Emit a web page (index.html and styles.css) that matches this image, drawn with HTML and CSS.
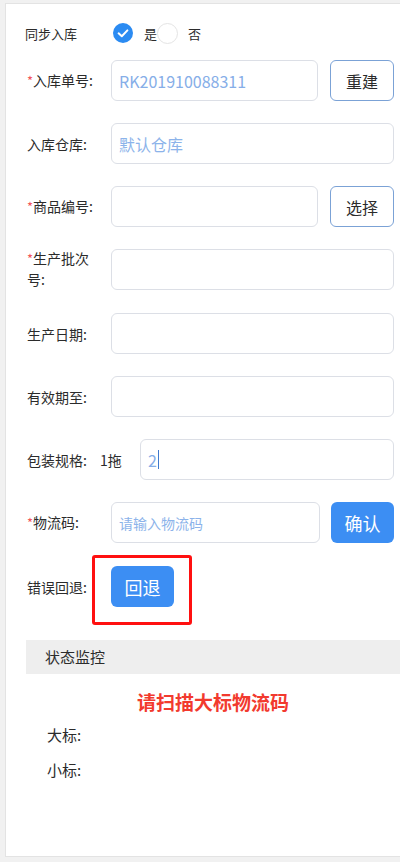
FILE: index.html
```html
<!DOCTYPE html>
<html lang="zh-CN">
<head>
<meta charset="utf-8">
<title>入库</title>
<link rel="stylesheet" href="styles.css">
</head>
<body>
<div class="card">
  <div class="sync">
    <span class="sync-label">同步入库</span>
    <span class="radio checked"><svg viewBox="0 0 20 20" width="20" height="20"><circle cx="10" cy="10" r="10" fill="#2b8bf2"/><polyline points="5.6,10.3 8.8,13.2 14.4,7.4" fill="none" stroke="#fff" stroke-width="2" stroke-linecap="round" stroke-linejoin="round"/></svg></span>
    <span class="opt opt-yes">是</span>
    <span class="radio empty"></span>
    <span class="opt opt-no">否</span>
  </div>

  <div class="row">
    <label class="label"><i class="req">*</i>入库单号:</label>
    <input class="field" type="text" value="RK201910088311">
    <button class="btn-outline">重建</button>
  </div>

  <div class="row">
    <label class="label">入库仓库:</label>
    <input class="field" type="text" placeholder="默认仓库">
  </div>

  <div class="row">
    <label class="label"><i class="req">*</i>商品编号:</label>
    <input class="field" type="text">
    <button class="btn-outline">选择</button>
  </div>

  <div class="row row-wide">
    <label class="label label-wrap"><span class="lw-line"><i class="req">*</i>生产批次</span><span class="lw-line">号:</span></label>
    <input class="field" type="text">
  </div>

  <div class="row">
    <label class="label">生产日期:</label>
    <input class="field" type="text">
  </div>

  <div class="row">
    <label class="label">有效期至:</label>
    <input class="field" type="text">
  </div>

  <div class="row">
    <label class="label label-pack">包装规格:<span class="pack-unit">1拖</span></label>
    <div class="field field-div"><span class="val">2</span><span class="caret"></span></div>
  </div>

  <div class="row row-wide">
    <label class="label"><i class="req">*</i>物流码:</label>
    <input class="field field-small" type="text" placeholder="请输入物流码">
    <button class="btn-primary btn-confirm">确认</button>
  </div>

  <div class="row row-back">
    <label class="label">错误回退:</label>
    <div class="mark">
      <button class="btn-primary">回退</button>
    </div>
  </div>

  <div class="status">
    <div class="status-head">状态监控</div>
    <div class="status-msg">请扫描大标物流码</div>
    <div class="status-line">大标:</div>
    <div class="status-line status-line2">小标:</div>
  </div>
</div>
</body>
</html>
```

FILE: styles.css
```css
html, body {
  margin: 0;
  padding: 0;
}

body {
  background: #f1f1f1;
  font-family: "Noto Sans CJK SC", "Microsoft YaHei", "Noto Sans", sans-serif;
  color: #2b2b2b;
}

.card {
  margin: 3px 0 0 5px;
  height: 854px;
  box-sizing: border-box;
  background: #fff;
  border: 1px solid #e3e3e3;
  border-right: none;
  padding: 19px 6px 0 19px;
}

/* sync radio row */
.sync {
  display: flex;
  align-items: center;
  height: 20px;
  margin-bottom: 17px;
  font-size: 13px;
  color: #2b2b2b;
}

.sync-label {
  width: 88px;
  flex: none;
}

.radio {
  width: 20px;
  height: 20px;
  flex: none;
  display: block;
}

.radio svg {
  display: block;
}

.radio.empty {
  width: 21px;
  height: 21px;
  box-sizing: border-box;
  border: 1px solid #e4e4e4;
  border-radius: 50%;
  background: #fff;
}

.opt-yes {
  margin-left: 11px;
}

.opt-no {
  margin-left: 10px;
}

/* form rows */
.row {
  display: flex;
  align-items: center;
  height: 41px;
  margin-bottom: 22px;
}

.row-wide {
  margin-bottom: 23px;
}

.label {
  width: 86px;
  flex: none;
  box-sizing: border-box;
  padding: 0 6px 0 2px;
  font-size: 14px;
  line-height: 16px;
  color: #2b2b2b;
}

.label-wrap {
  display: flex;
  flex-direction: column;
  line-height: 21px;
  margin-top: -2px;
}

.lw-line {
  display: block;
  white-space: nowrap;
}

.req {
  font-style: normal;
  color: #f2555a;
  font-size: 13px;
}

.label-pack {
  width: 115px;
}

.pack-unit {
  margin-left: 13px;
}

.field {
  flex: 1;
  min-width: 0;
  height: 41px;
  box-sizing: border-box;
  border: 1px solid #dcdfe6;
  border-radius: 6px;
  padding: 0 7px;
  font-family: inherit;
  font-size: 16px;
  color: #86aee8;
  background: #fff;
  outline: none;
}

.field::placeholder {
  color: #8cb3ea;
}

.field-small {
  font-size: 14px;
}

.field-div {
  display: flex;
  align-items: center;
}

.caret {
  display: inline-block;
  width: 1px;
  height: 19px;
  background: #3f79cc;
  margin-left: 1px;
}

.btn-outline {
  flex: none;
  width: 64px;
  height: 41px;
  margin-left: 12px;
  box-sizing: border-box;
  border: 1px solid #7ba2d6;
  border-radius: 6px;
  background: #fff;
  font-family: inherit;
  font-size: 16px;
  color: #2b2b2b;
  padding: 0;
}

.btn-primary {
  flex: none;
  width: 63px;
  height: 41px;
  box-sizing: border-box;
  border: none;
  border-radius: 6px;
  background: #3c8ef3;
  color: #fff;
  font-family: inherit;
  font-size: 18px;
  padding: 0;
}

.btn-confirm {
  margin-left: 11px;
}

.row-back {
  margin-bottom: 33px;
}

.mark {
  position: relative;
  display: flex;
}

.mark::after {
  content: "";
  position: absolute;
  top: -11px;
  left: -19px;
  right: -18px;
  bottom: -18px;
  border: 3px solid #ff1010;
  border-radius: 3px;
  pointer-events: none;
}

/* status */
.status {
  margin: 0 -6px 0 1px;
}

.status-head {
  height: 34px;
  line-height: 34px;
  background: #eeeeee;
  padding-left: 19px;
  font-size: 15px;
  color: #2b2b2b;
}

.status-msg {
  margin-top: 16px;
  text-align: center;
  font-size: 19px;
  line-height: 24px;
  font-weight: bold;
  color: #f23a2e;
}

.status-line {
  margin-top: 11px;
  padding-left: 21px;
  font-size: 15px;
  line-height: 20px;
  color: #2b2b2b;
}

.status-line2 {
  margin-top: 15px;
}
```
